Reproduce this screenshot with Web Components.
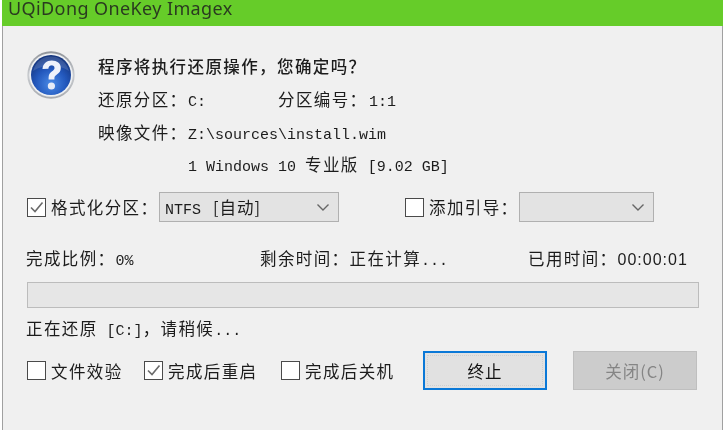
<!DOCTYPE html>
<html lang="zh">
<head>
<meta charset="utf-8">
<title>UQiDong OneKey Imagex</title>
<style>
  html, body { margin: 0; padding: 0; background: #fff; }
  body { width: 725px; height: 448px; overflow: hidden; color: #1c1c1c;
    font-family: "Liberation Mono", "Noto Sans CJK SC", monospace; font-size: 15px; }
</style>
</head>
<body>
<imagex-window title-text="UQiDong OneKey Imagex">
  <div style="display:flex;height:132px">
    <question-icon></question-icon>
    <restore-info></restore-info>
  </div>
  <div style="display:flex;align-items:center;height:30px;margin-top:10px">
    <check-item checked style="width:132px">格式化分区&#xFF1A;</check-item>
    <combo-box width="180" value="NTFS" note="[自动]"></combo-box>
    <check-item style="width:114px;margin-left:66px">添加引导&#xFF1A;</check-item>
    <combo-box width="135"></combo-box>
  </div>
  <status-row style="margin-top:24px"></status-row>
  <progress-track style="margin-top:12px"></progress-track>
  <status-line style="margin-top:8px"></status-line>
  <div style="display:flex;align-items:center;height:39px;margin-top:11px">
    <check-item style="width:117px">文件效验</check-item>
    <check-item checked style="width:137px">完成后重启</check-item>
    <check-item style="width:142px">完成后关机</check-item>
    <flat-button primary>终止</flat-button>
    <flat-button disabled style="margin-left:26px">关闭(C)</flat-button>
  </div>
</imagex-window>

<script>
const CN_FONT = `"Noto Sans CJK SC", "Liberation Mono", monospace`;
const CN_MONO = `"Liberation Mono", "Noto Sans CJK SC", monospace`;
// shared by every block that mixes chinese labels with fixed width values
const TEXT_STYLES = `
  .cn { font-family: ${CN_FONT}; font-size: 16.5px; letter-spacing: 1.4px; }
  .mono { font-family: ${CN_MONO}; font-size: 15px; white-space: pre; }
`;

class ImagexWindow extends HTMLElement {
  constructor() {
    super();
    this.shadowDOM = this.attachShadow({ mode: "open" });
  }

  connectedCallback() {
    this.shadowDOM.innerHTML = `
      <style>
        :host { display: block; margin-left: 2px; width: 721px; height: 430px; filter: blur(0.35px); }
        .title {
          height: 26px;
          background: #66cc29;
          color: #2a3a20;
          font-family: "Noto Sans", sans-serif;
          font-size: 18px;
          line-height: 17px;
          padding-left: 6px;
          letter-spacing: 0.4px;
          overflow: hidden;
        }
        .body {
          box-sizing: border-box;
          height: 404px;
          background: #f0f0f0;
          border-left: 1px solid #a0a0a0;
          border-right: 1px solid #a0a0a0;
          padding: 24px 0 0 24px;
        }
      </style>
      <div class="title">${this.getAttribute("title-text")}</div>
      <div class="body"><slot></slot></div>
    `;
  }
}

class QuestionIcon extends HTMLElement {
  constructor() {
    super();
    this.shadowDOM = this.attachShadow({ mode: "open" });
    this.shadowDOM.innerHTML = `
      <style>:host { display: block; width: 71px; flex: none; padding-top: 1px; } svg { display: block; }</style>
      <svg width="48" height="48" viewBox="0 0 48 48">
        <defs>
          <radialGradient id="ball" cx="50%" cy="72%" r="68%">
            <stop offset="0" stop-color="#4a8ae6"/>
            <stop offset="0.55" stop-color="#2358bd"/>
            <stop offset="1" stop-color="#14357f"/>
          </radialGradient>
          <linearGradient id="ring" x1="0" y1="0" x2="0" y2="1">
            <stop offset="0" stop-color="#8f9399"/>
            <stop offset="0.5" stop-color="#c9ccd0"/>
            <stop offset="1" stop-color="#a8abb0"/>
          </linearGradient>
        </defs>
        <circle cx="24" cy="24" r="23.7" fill="url(#ring)"/>
        <circle cx="24" cy="24" r="21.8" fill="#eef0f2"/>
        <circle cx="24" cy="24" r="20" fill="url(#ball)"/>
        <path d="M6 20C9 10 16 5.5 24 5.5S39 10 42 20c-6-4-12-5-18-5S12 16 6 20z" fill="#fff" opacity=".14"/>
        <path d="M15.5 18C16 12.5 19.6 9.5 24.8 9.5c5.2 0 9 2.9 9 7.4 0 3.2-1.7 5-3.9 6.5-1.9 1.3-2.5 2.2-2.5 4.1v1h-5.8v-1.7c0-3.1 1.1-4.6 3.2-6.2 1.7-1.3 2.7-2.2 2.7-3.6 0-1.6-1.1-2.7-2.8-2.7-2 0-3.1 1.3-3.3 3.4z" fill="#eef2fb"/>
        <circle cx="24.4" cy="35" r="3.6" fill="#e6ebf7"/>
      </svg>
    `;
  }
}

class RestoreInfo extends HTMLElement {
  constructor() {
    super();
    this.shadowDOM = this.attachShadow({ mode: "open" });
    this.shadowDOM.innerHTML = `
      <style>
        ${TEXT_STYLES}
        :host { display: block; color: #1c1c1c; }
        .row { display: grid; grid-template-columns: 90px 90px 91px auto; align-items: baseline; height: 33px; line-height: 33px; white-space: nowrap; }
        .row:last-child { height: 32px; line-height: 31px; }
        .head { font-weight: 500; grid-column: 1 / -1; }
      </style>
      <div class="row"><span class="cn head">程序将执行还原操作&#xFF0C;您确定吗&#xFF1F;</span></div>
      <div class="row"><span class="cn">还原分区&#xFF1A;</span><span class="mono">C:</span><span class="cn">分区编号&#xFF1A;</span><span class="mono">1:1</span></div>
      <div class="row"><span class="cn">映像文件&#xFF1A;</span><span class="mono" style="grid-column: 2 / -1">Z:\\sources\\install.wim</span></div>
      <div class="row"><span></span><span style="grid-column: 2 / -1"><span class="mono">1 Windows 10 </span><span class="cn">专业版</span><span class="mono"> [9.02 GB]</span></span></div>
    `;
  }
}

class CheckItem extends HTMLElement {
  constructor() {
    super();
    this.shadowDOM = this.attachShadow({ mode: "open" });
  }

  connectedCallback() {
    const tick = this.hasAttribute("checked")
      ? `<svg width="17" height="17" viewBox="0 0 17 17"><path d="M3 8.5 7 12.5 14.5 3.5" fill="none" stroke="#6a6a6a" stroke-width="1.6"/></svg>`
      : "";
    this.shadowDOM.innerHTML = `
      <style>
        :host { display: flex; align-items: center; gap: 5px; flex: none; font-family: ${CN_FONT}; font-size: 16.5px; letter-spacing: 1.4px; white-space: nowrap; }
        .box { box-sizing: border-box; width: 19px; height: 19px; border: 1px solid #4a4a4a; background: #fff; flex: none; }
        svg { display: block; }
      </style>
      <span class="box">${tick}</span><slot></slot>
    `;
  }
}

class ComboBox extends HTMLElement {
  constructor() {
    super();
    this.shadowDOM = this.attachShadow({ mode: "open" });
  }

  connectedCallback() {
    const value = this.getAttribute("value") || "";
    const note = this.getAttribute("note") || "";
    this.shadowDOM.innerHTML = `
      <style>
        ${TEXT_STYLES}
        :host { display: block; flex: none; width: ${this.getAttribute("width")}px; }
        .box {
          box-sizing: border-box; height: 30px; display: flex; align-items: center; justify-content: space-between;
          background: #e3e3e3; border: 1px solid #b0b0b0; padding: 0 8px 0 5px;
        }
        .val { display: flex; align-items: baseline; gap: 12px; }
        .note { letter-spacing: 1px; }
        svg { display: block; flex: none; }
      </style>
      <div class="box">
        <span class="val"><span class="mono">${value}</span><span class="cn note">${note}</span></span>
        <svg width="14" height="9" viewBox="0 0 14 9"><path d="M1.5 1.5 7 7l5.5-5.5" fill="none" stroke="#666" stroke-width="1.4"/></svg>
      </div>
    `;
  }
}

class StatusRow extends HTMLElement {
  constructor() {
    super();
    this.shadowDOM = this.attachShadow({ mode: "open" });
    this.shadowDOM.innerHTML = `
      <style>
        ${TEXT_STYLES}
        :host { display: grid; grid-template-columns: 234px 268px auto; height: 24px; line-height: 24px; margin-left: -1px; white-space: nowrap; }
        .time { font-family: "Liberation Sans", sans-serif; font-size: 16px; letter-spacing: 1px; }
      </style>
      <div><span class="cn">完成比例&#xFF1A;</span><span class="mono">0%</span></div>
      <div><span class="cn">剩余时间&#xFF1A;正在计算</span><span class="mono">...</span></div>
      <div><span class="cn">已用时间&#xFF1A;</span><span class="time">00:00:01</span></div>
    `;
  }
}

class ProgressTrack extends HTMLElement {
  constructor() {
    super();
    this.shadowDOM = this.attachShadow({ mode: "open" });
    this.shadowDOM.innerHTML = `
      <style>
        :host { display: block; box-sizing: border-box; width: 672px; height: 26px; background: #e6e6e6; border: 1px solid #bcbcbc; }
      </style>
    `;
  }
}

class StatusLine extends HTMLElement {
  constructor() {
    super();
    this.shadowDOM = this.attachShadow({ mode: "open" });
    this.shadowDOM.innerHTML = `
      <style>
        ${TEXT_STYLES}
        :host { display: block; height: 24px; line-height: 24px; margin-left: -1px; white-space: nowrap; }
      </style>
      <span class="cn">正在还原</span><span class="mono"> [C:]</span><span class="cn">&#xFF0C;请稍候</span><span class="mono">...</span>
    `;
  }
}

class FlatButton extends HTMLElement {
  constructor() {
    super();
    this.shadowDOM = this.attachShadow({ mode: "open" });
    this.shadowDOM.innerHTML = `
      <style>
        :host { display: flex; box-sizing: border-box; align-items: center; justify-content: center; flex: none;
          width: 124px; height: 39px; font-family: ${CN_FONT}; font-size: 16.5px; letter-spacing: 1px;
          background: #e1e1e1; border: 1px solid #adadad; }
        :host([primary]) { border: 2px solid #0a78d7; color: #111; outline: 1px dotted #cfcfcf; outline-offset: -5px; }
        :host([disabled]) { background: #cccccc; border-color: #bfbfbf; color: #858585; }
      </style>
      <slot></slot>
    `;
  }
}

customElements.define("imagex-window", ImagexWindow);
customElements.define("question-icon", QuestionIcon);
customElements.define("restore-info", RestoreInfo);
customElements.define("check-item", CheckItem);
customElements.define("combo-box", ComboBox);
customElements.define("status-row", StatusRow);
customElements.define("progress-track", ProgressTrack);
customElements.define("status-line", StatusLine);
customElements.define("flat-button", FlatButton);
</script>
</body>
</html>
